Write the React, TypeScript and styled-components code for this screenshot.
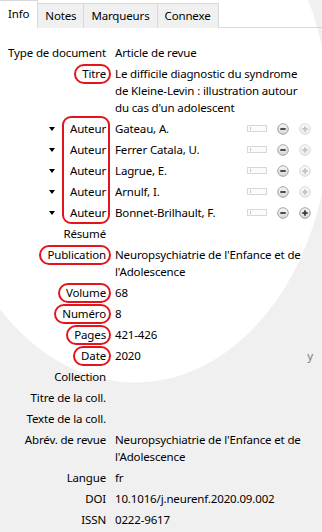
import React from 'react';
import styled, { createGlobalStyle, css } from 'styled-components';

const GlobalStyle = createGlobalStyle`
  html, body {
    margin: 0;
    padding: 0;
  }
  body {
    background: #f0f0f0;
    font-family: "Noto Sans", "Segoe UI", sans-serif;
    font-size: 11.5px;
    letter-spacing: -0.15px;
    color: #000;
  }
`;

const RED = '#e3141c';

const Page = styled.div`
  width: 322px;
  height: 532px;
  overflow: hidden;
  background: radial-gradient(195px 263px at 135px 120px, #fff 99.6%, #f0f0f0 100%) no-repeat, #f0f0f0;
`;

const TabBar = styled.div`
  display: flex;
  align-items: flex-end;
  height: 28px;
  border-bottom: 1px solid #d9d9d9;
  box-sizing: border-box;
`;

const Tab = styled.div<{ $active?: boolean }>`
  height: 25px;
  line-height: 24px;
  padding: 0 7px;
  margin-right: -1px;
  margin-bottom: -1px;
  border: 1px solid #d9d9d9;
  border-bottom: none;
  background: #f0f0f0;
  box-sizing: border-box;
  ${({ $active }) =>
    $active &&
    css`
      height: 28px;
      line-height: 26px;
      padding: 0 8px;
      background: #fff;
      border-left: none;
      position: relative;
      z-index: 1;
    `}
`;

const Fields = styled.div`
  padding: 14px 9px 0 0;
`;

const Row = styled.div`
  display: flex;
  align-items: flex-start;
  padding: 2px 0;
  line-height: 17px;
`;

const Label = styled.div`
  flex: 0 0 106px;
  display: flex;
  justify-content: flex-end;
  align-items: center;
  margin-right: 9px;
  white-space: nowrap;
`;

const LabelText = styled.span<{ $mark?: boolean }>`
  position: relative;
  ${({ $mark }) =>
    $mark &&
    css`
      &::after {
        content: '';
        position: absolute;
        top: -1px;
        bottom: -2px;
        left: -8px;
        right: -5px;
        border: 2px solid ${RED};
        border-radius: 11px;
      }
    `}
`;

const Value = styled.div`
  flex: 1;
  min-width: 0;
`;

const Hint = styled.span`
  color: #7a7a7a;
  margin-left: 6px;
`;

const AuthorGroup = styled.div`
  position: relative;
  &::before {
    content: '';
    position: absolute;
    left: 62px;
    width: 44px;
    top: -2px;
    bottom: -1px;
    border: 2px solid ${RED};
    border-radius: 9px;
  }
`;

const Caret = styled.span`
  width: 0;
  height: 0;
  border-top: 4px solid #000;
  border-left: 3px solid transparent;
  border-right: 3px solid transparent;
  margin-right: 15px;
`;

const Controls = styled.div`
  display: flex;
  align-items: center;
  height: 17px;
  gap: 10px;
  margin-right: 2px;
`;

const TinyField = styled.span`
  position: relative;
  width: 20px;
  height: 7px;
  border: 1px solid #d8d8d8;
  background: #fbfbfb;
  box-sizing: border-box;
  &::before {
    content: '';
    position: absolute;
    left: 2px;
    top: 1px;
    bottom: 1px;
    width: 1px;
    background: #c8c8c8;
  }
`;

const RoundButton = ({ kind, faded }: { kind: 'minus' | 'plus'; faded?: boolean }) => {
  const ring = faded ? '#d4d4d4' : '#9a9a9a';
  const glyph = faded ? '#c4c4c4' : '#3c3c3c';
  const id = `g-${kind}-${faded ? 1 : 0}`;
  return (
    <svg width="12" height="12" viewBox="0 0 12 12">
      <defs>
        <linearGradient id={id} x1="0" y1="0" x2="0" y2="1">
          <stop offset="0" stopColor={faded ? '#fbfbfb' : '#f7f7f7'} />
          <stop offset="1" stopColor={faded ? '#ececec' : '#d6d6d6'} />
        </linearGradient>
      </defs>
      <circle cx="6" cy="6" r="5.3" fill={`url(#${id})`} stroke={ring} strokeWidth="0.9" />
      <rect x="3.3" y="5.1" width="5.4" height="1.8" fill={glyph} />
      {kind === 'plus' && <rect x="5.1" y="3.3" width="1.8" height="5.4" fill={glyph} />}
    </svg>
  );
};

const authors = ['Gateau, A.', 'Ferrer Catala, U.', 'Lagrue, E.', 'Arnulf, I.', 'Bonnet-Brilhault, F.'];

type Field = { label: string; value?: string; mark?: boolean; hint?: string };

const topFields: Field[] = [
  { label: 'Type de document', value: 'Article de revue' },
  { label: 'Titre', value: "Le difficile diagnostic du syndrome de Kleine-Levin : illustration autour du cas d'un adolescent", mark: true },
];

const bottomFields: Field[] = [
  { label: 'Résumé' },
  { label: 'Publication', value: "Neuropsychiatrie de l'Enfance et de l'Adolescence", mark: true },
  { label: 'Volume', value: '68', mark: true },
  { label: 'Numéro', value: '8', mark: true },
  { label: 'Pages', value: '421-426', mark: true },
  { label: 'Date', value: '2020', mark: true, hint: 'y' },
  { label: 'Collection' },
  { label: 'Titre de la coll.' },
  { label: 'Texte de la coll.' },
  { label: 'Abrév. de revue', value: "Neuropsychiatrie de l'Enfance et de l'Adolescence" },
  { label: 'Langue', value: 'fr' },
  { label: 'DOI', value: '10.1016/j.neurenf.2020.09.002' },
  { label: 'ISSN', value: '0222-9617' },
];

const FieldRow = ({ field }: { field: Field }) => (
  <Row>
    <Label>
      <LabelText $mark={field.mark}>{field.label}</LabelText>
    </Label>
    <Value>{field.value}</Value>
    {field.hint && <Hint>{field.hint}</Hint>}
  </Row>
);

const App = () => {
  return (
    <>
      <GlobalStyle />
      <Page>
        <TabBar>
          <Tab $active>Info</Tab>
          <Tab>Notes</Tab>
          <Tab>Marqueurs</Tab>
          <Tab>Connexe</Tab>
        </TabBar>
        <Fields>
          {topFields.map((f) => (
            <FieldRow key={f.label} field={f} />
          ))}
          <AuthorGroup>
            {authors.map((name, i) => (
              <Row key={name}>
                <Label>
                  <Caret />
                  <LabelText>Auteur</LabelText>
                </Label>
                <Value>{name}</Value>
                <Controls>
                  <TinyField />
                  <RoundButton kind="minus" />
                  <RoundButton kind="plus" faded={i < authors.length - 1} />
                </Controls>
              </Row>
            ))}
          </AuthorGroup>
          {bottomFields.map((f) => (
            <FieldRow key={f.label} field={f} />
          ))}
        </Fields>
      </Page>
    </>
  );
};

export default App;
